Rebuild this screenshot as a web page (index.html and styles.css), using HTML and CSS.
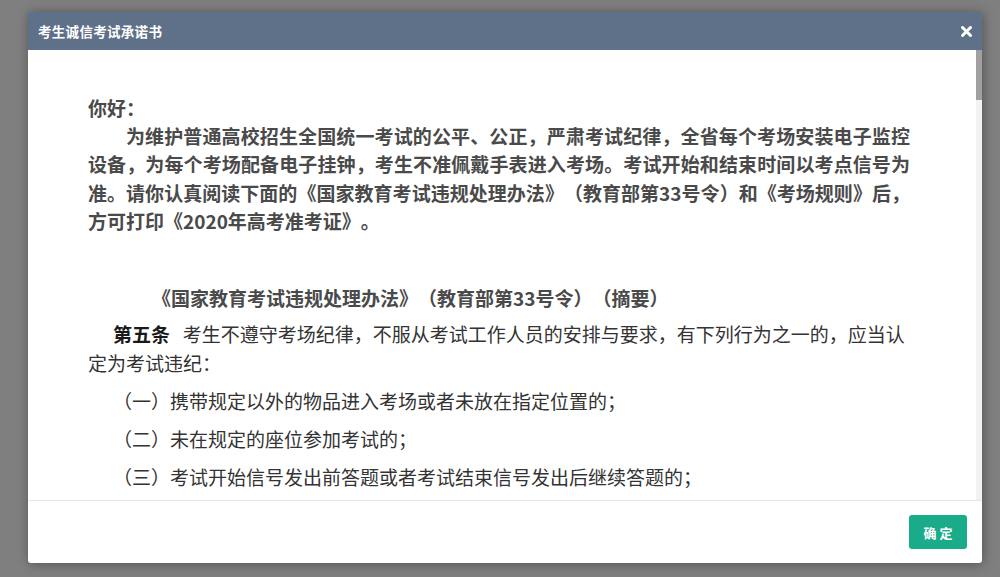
FILE: index.html
```html
<!DOCTYPE html>
<html lang="zh-CN">
<head>
<meta charset="utf-8">
<title>考生诚信考试承诺书</title>
<link rel="stylesheet" href="styles.css">
</head>
<body>
<div class="overlay">
  <div class="dialog">
    <div class="dialog-header">
      <span class="dialog-title">考生诚信考试承诺书</span>
      <button class="dialog-close" aria-label="关闭">
        <svg width="11" height="11" viewBox="0 0 11 11"><path d="M1.5 1.5 L9.5 9.5 M9.5 1.5 L1.5 9.5" stroke="#fff" stroke-width="3" stroke-linecap="round"/></svg>
      </button>
    </div>
    <div class="dialog-body">
      <div class="body-content">
        <div class="greeting">你好：</div>
        <p class="intro">为维护普通高校招生全国统一考试的公平、公正，严肃考试纪律，全省每个考场安装电子监控设备，为每个考场配备电子挂钟，考生不准佩戴手表进入考场。考试开始和结束时间以考点信号为准。请你认真阅读下面的《国家教育考试违规处理办法》（教育部第33号令）和《考场规则》后，方可打印《2020年高考准考证》。</p>
        <p class="section-title">《国家教育考试违规处理办法》（教育部第33号令）（摘要）</p>
        <p class="rule"><strong class="article">第五条</strong>&nbsp;&nbsp;&nbsp;考生不遵守考场纪律，不服从考试工作人员的安排与要求，有下列行为之一的，应当认定为考试违纪：</p>
        <p class="rule">（一）携带规定以外的物品进入考场或者未放在指定位置的；</p>
        <p class="rule">（二）未在规定的座位参加考试的；</p>
        <p class="rule">（三）考试开始信号发出前答题或者考试结束信号发出后继续答题的；</p>
      </div>
      <div class="scrollbar"><div class="scroll-thumb"></div></div>
    </div>
    <div class="dialog-footer">
      <button class="btn-ok">确 定</button>
    </div>
  </div>
</div>
</body>
</html>
```
FILE: styles.css
```css
html, body {
  margin: 0;
  padding: 0;
}
body {
  width: 1000px;
  height: 577px;
  overflow: hidden;
  background: #7f7f7f;
  font-family: "Noto Sans CJK SC", "Noto Sans", sans-serif;
}
.overlay {
  padding: 12px 0 0 28px;
}
.dialog {
  width: 954px;
  background: #fff;
  border-radius: 0 0 3px 3px;
  box-shadow: 1px 1px 12px rgba(0, 0, 0, 0.35);
}
.dialog-header {
  height: 38px;
  background: #5f7089;
  display: flex;
  align-items: center;
  justify-content: space-between;
  padding: 0 10px 0 10px;
}
.dialog-title {
  color: #fff;
  font-size: 13.5px;
  font-weight: 700;
  letter-spacing: 0.3px;
}
.dialog-close {
  border: 0;
  background: transparent;
  padding: 0;
  width: 12px;
  height: 12px;
  display: flex;
  align-items: center;
  justify-content: center;
}
.dialog-body {
  height: 450px;
  display: flex;
}
.body-content {
  flex: 1;
  overflow: hidden;
  padding: 44px 66px 0 60px;
  font-size: 19px;
  text-spacing-trim: space-all;
}
.scrollbar {
  width: 6px;
  background: #f3f3f3;
}
.scroll-thumb {
  height: 50px;
  background: #a0a0a0;
}
.greeting {
  font-weight: 700;
  color: #4a4a4a;
  line-height: 28px;
}
.intro {
  margin: 0;
  font-weight: 700;
  color: #4a4a4a;
  line-height: 28.3px;
  text-indent: 38px;
  text-align: justify;
}
.section-title {
  margin: 48px 0 7px 0;
  font-weight: 700;
  color: #4a4a4a;
  line-height: 29px;
  text-indent: 64px;
}
.rule {
  margin: 0 0 9px 0;
  color: #333;
  line-height: 29px;
  text-indent: 25px;
}
.article {
  color: #1a1a1a;
}
.dialog-footer {
  border-top: 1px solid #e6e6e6;
  padding: 14px 15px 14px 0;
  display: flex;
  justify-content: flex-end;
}
.btn-ok {
  width: 58px;
  height: 34px;
  border: 0;
  border-radius: 3px;
  background: #1aab8a;
  color: #fff;
  font-family: "Noto Sans CJK SC", sans-serif;
  font-size: 13px;
  font-weight: 700;
  padding: 0;
}
```
